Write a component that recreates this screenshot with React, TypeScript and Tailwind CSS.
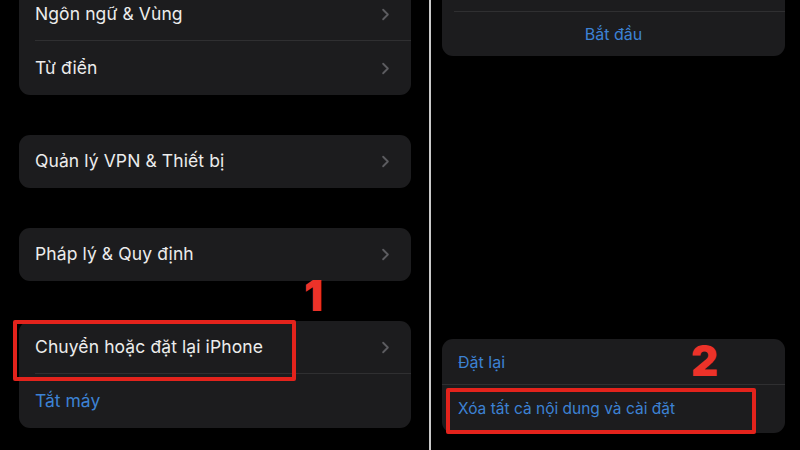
import { ChevronRight } from 'lucide-react';

const FONT = { fontFamily: 'Inter, "Noto Sans", sans-serif' };

function Row({ label, height, divider }: { label: string; height: string; divider?: boolean }) {
  return (
    <div className={`relative flex items-center pl-4 pr-4 ${height}`}>
      <span className="text-[17.5px] text-[#ececec] tracking-[0.1px]">{label}</span>
      <ChevronRight className="ml-auto text-[#5c5c60]" size={19} strokeWidth={2.3} />
      {divider && <div className="absolute bottom-0 left-4 right-0 h-px bg-[#2f2f31]" />}
    </div>
  );
}

function Mark({ n, className }: { n: string; className: string }) {
  return (
    <span className={`absolute text-[42px] leading-none font-black text-[#ec3229] ${className}`}>{n}</span>
  );
}

export default function App() {
  return (
    <div className="flex w-[800px] h-[450px] overflow-hidden bg-black" style={FONT}>
      {/* left screen */}
      <div className="flex flex-col w-[429px] shrink-0 pl-[19px] pr-[18px]">
        <div className="-mt-[13px] rounded-[11px] bg-[#1c1c1e]">
          <Row label="Ngôn ngữ & Vùng" height="h-[54px]" divider />
          <Row label="Từ điển" height="h-[54px]" />
        </div>
        <div className="mt-[40px] rounded-[11px] bg-[#1c1c1e]">
          <Row label="Quản lý VPN & Thiết bị" height="h-[53px]" />
        </div>
        <div className="mt-[40px] rounded-[11px] bg-[#1c1c1e]">
          <Row label="Pháp lý & Quy định" height="h-[53px]" />
        </div>
        <div className="relative mt-[40px] rounded-[11px] bg-[#1c1c1e]">
          <Row label="Chuyển hoặc đặt lại iPhone" height="h-[53px]" divider />
          <div className="flex items-center h-[54px] pl-4">
            <span className="text-[17.5px] text-[#3c82d4]">Tắt máy</span>
          </div>
          <div className="absolute -left-[6px] -top-[1px] w-[283px] h-[61px] border-[4px] border-[#e3231c] rounded-[2px]" />
          <Mark n="1" className="left-[285px] -top-[46px]" />
        </div>
      </div>

      {/* divider between screens */}
      <div className="w-[2px] shrink-0 bg-[#c9c9c9]" />

      {/* right screen */}
      <div className="flex flex-col flex-1 pl-[11px] pr-[15px]">
        <div className="-mt-[32px] rounded-[11px] bg-[#1c1c1e]">
          <div className="h-[44px] border-b border-[#2f2f31] ml-3" />
          <div className="flex items-center justify-center h-[44px]">
            <span className="text-[16px] text-[#3c82d4]">Bắt đầu</span>
          </div>
        </div>
        <div className="relative mt-[283px] rounded-[11px] bg-[#1c1c1e]">
          <div className="flex items-center h-[46px] pl-4 border-b border-[#2f2f31]">
            <span className="text-[16px] text-[#3c82d4]">Đặt lại</span>
          </div>
          <div className="flex items-center h-[48px] pl-4">
            <span className="text-[15.5px] text-[#3c82d4]">Xóa tất cả nội dung và cài đặt</span>
          </div>
          <div className="absolute left-[4px] top-[49px] w-[310px] h-[46px] border-[4px] border-[#e3231c] rounded-[2px]" />
          <Mark n="2" className="left-[249px] top-[1px]" />
        </div>
      </div>
    </div>
  );
}
